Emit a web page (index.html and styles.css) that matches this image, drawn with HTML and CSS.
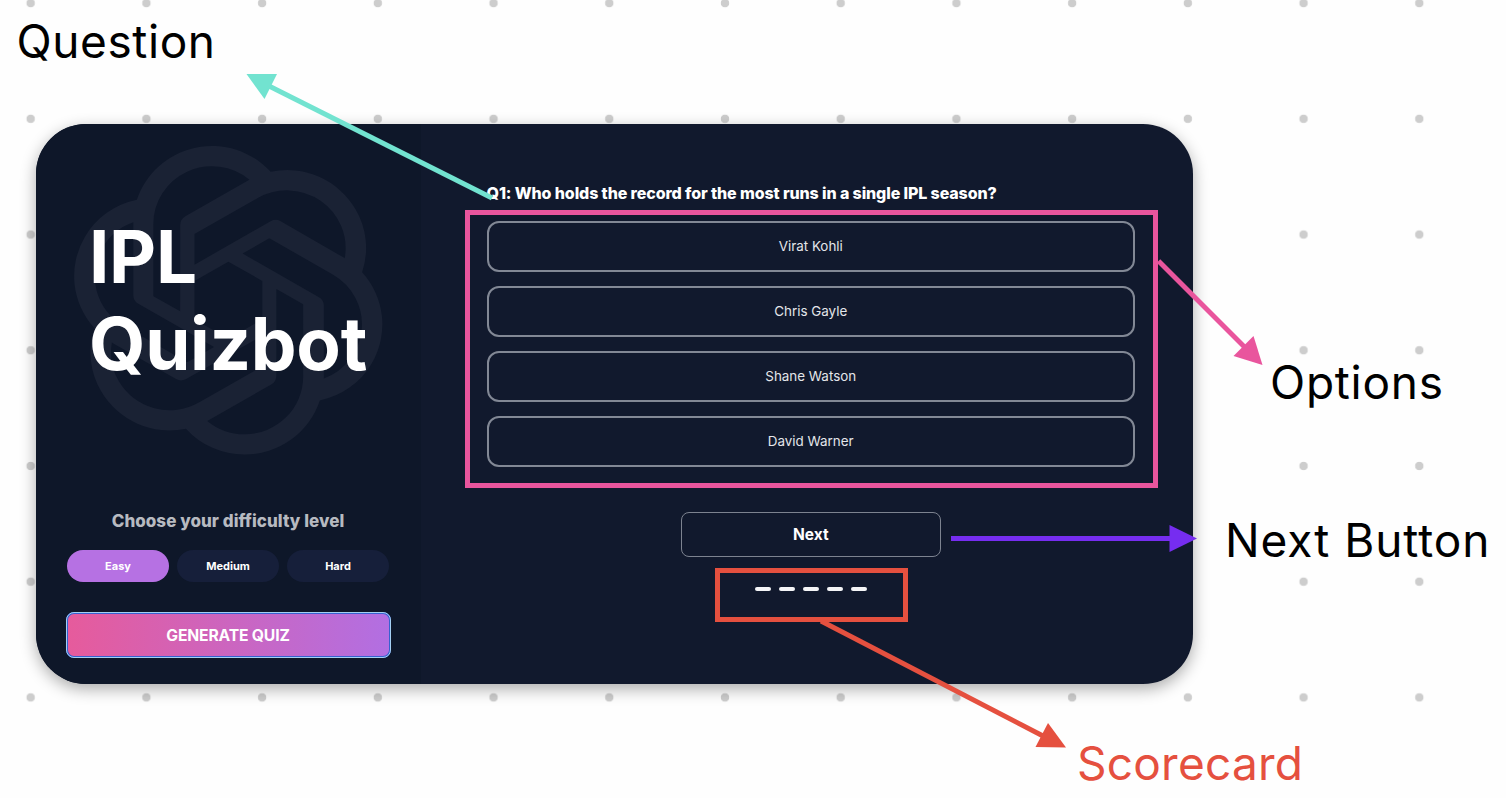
FILE: index.html
```html
<!DOCTYPE html>
<html lang="en">
<head>
<meta charset="utf-8">
<title>IPL Quizbot</title>
<link rel="stylesheet" href="styles.css">
</head>
<body>
<div class="board">
  <main class="card">
    <section class="side">
      <svg class="emblem" viewBox="0 0 24 24" preserveAspectRatio="none" aria-hidden="true"><path d="M22.2819 9.8211a5.9847 5.9847 0 0 0-.5157-4.9108 6.0462 6.0462 0 0 0-6.5098-2.9A6.0651 6.0651 0 0 0 4.9807 4.1818a5.9847 5.9847 0 0 0-3.9977 2.9 6.0462 6.0462 0 0 0 .7427 7.0966 5.98 5.98 0 0 0 .511 4.9107 6.051 6.051 0 0 0 6.5146 2.9001A5.9847 5.9847 0 0 0 13.2599 24a6.0557 6.0557 0 0 0 5.7718-4.2058 5.9894 5.9894 0 0 0 3.9977-2.9001 6.0557 6.0557 0 0 0-.7475-7.0729zm-9.022 12.6081a4.4755 4.4755 0 0 1-2.8764-1.0408l.1419-.0804 4.7783-2.7582a.7948.7948 0 0 0 .3927-.6813v-6.7369l2.02 1.1686a.071.071 0 0 1 .038.052v5.5826a4.504 4.504 0 0 1-4.4945 4.4944zm-9.6607-4.1254a4.4708 4.4708 0 0 1-.5346-3.0137l.142.0852 4.783 2.7582a.7712.7712 0 0 0 .7806 0l5.8428-3.3685v2.3324a.0804.0804 0 0 1-.0332.0615L9.74 19.9502a4.4992 4.4992 0 0 1-6.1408-1.6464zM2.3408 7.8956a4.485 4.485 0 0 1 2.3655-1.9728V11.6a.7664.7664 0 0 0 .3879.6765l5.8144 3.3543-2.0201 1.1685a.0757.0757 0 0 1-.071 0l-4.8303-2.7865A4.504 4.504 0 0 1 2.3408 7.872zm16.5963 3.8558L13.1038 8.364 15.1192 7.2a.0757.0757 0 0 1 .071 0l4.8303 2.7913a4.4944 4.4944 0 0 1-.6765 8.1042v-5.6772a.79.79 0 0 0-.407-.667zm2.0107-3.0231l-.142-.0852-4.7735-2.7818a.7759.7759 0 0 0-.7854 0L9.409 9.2297V6.8974a.0662.0662 0 0 1 .0284-.0615l4.8303-2.7866a4.4992 4.4992 0 0 1 6.6802 4.66zM8.3065 12.863l-2.02-1.1638a.0804.0804 0 0 1-.038-.0567V6.0742a4.4992 4.4992 0 0 1 7.3757-3.4537l-.142.0805L8.704 5.459a.7948.7948 0 0 0-.3927.6813zm1.0976-2.3654l2.602-1.4998 2.6069 1.4998v2.9994l-2.5974 1.4997-2.6067-1.4997Z"/></svg>
      <h1 class="title">IPL<br>Quizbot</h1>
      <div class="controls">
        <p class="prompt">Choose your difficulty level</p>
        <div class="levels">
          <button class="level level-active">Easy</button>
          <button class="level">Medium</button>
          <button class="level">Hard</button>
        </div>
        <button class="generate">GENERATE QUIZ</button>
      </div>
    </section>
    <section class="quiz">
      <h2 class="question">Q1: Who holds the record for the most runs in a single IPL season?</h2>
      <div class="options">
        <button class="option">Virat Kohli</button>
        <button class="option">Chris Gayle</button>
        <button class="option">Shane Watson</button>
        <button class="option">David Warner</button>
      </div>
      <button class="next">Next</button>
      <div class="score"><i class="mark"></i><i class="mark"></i><i class="mark"></i><i class="mark"></i><i class="mark"></i></div>
    </section>
  </main>
  <svg class="notes" viewBox="0 0 1506 798">
    <g class="teal"><path class="line" d="M268 85.500 492 198"/><path class="head" d="M246.500 74H277L264.500 99Z"/></g>
    <g class="pink"><rect class="line" x="467.500" y="212.500" width="688" height="273"/><path class="line" d="M1158.500 261 1246 348.500"/><path class="head" d="M1262.500 365 1253.500 336 1233.500 356Z"/></g>
    <g class="violet"><path class="line" d="M951 538.500H1172"/><path class="head" d="M1197 538.500 1169.500 525V552Z"/></g>
    <g class="red"><rect class="line" x="717.500" y="570.500" width="188" height="49"/><path class="line" d="M821 621 1045 737"/><path class="head" d="M1066 747.500 1048 723 1035.500 747Z"/></g>
    <g class="label">
      <text x="16.500" y="57.500" textLength="198.500">Question</text>
      <text x="1270" y="398.500" textLength="173">Options</text>
      <text x="1225" y="556.500" textLength="264.500">Next Button</text>
      <text class="label-red" x="1077" y="779.500" textLength="226">Scorecard</text>
    </g>
  </svg>
</div>
</body>
</html>
```
FILE: styles.css
```css
* { box-sizing: border-box; }
body { margin: 0; font-family: Inter, sans-serif; }
button { margin: 0; padding: 0; border: 0; font-family: inherit; color: #fff; }

.board {
  position: relative;
  width: 1506px;
  height: 798px;
  overflow: hidden;
  padding: 123.500px 0 0 35.500px;
  background: #fefefe radial-gradient(circle, #cdcdcd 3.900px, rgba(205, 205, 205, 0) 4.600px) -27.200px -54.750px / 115.720px 115.720px;
}

.card {
  display: flex;
  width: 1157px;
  height: 560.500px;
  overflow: hidden;
  border-radius: 50px;
  background: #11192d;
  box-shadow: 0 5px 16px rgba(0, 0, 0, .33);
}

.side {
  position: relative;
  display: flex;
  flex-direction: column;
  justify-content: space-between;
  width: 385px;
  padding: 90.500px 30px 26px;
  background: #0e1729;
}
.emblem {
  position: absolute;
  left: 36px;
  top: 22.500px;
  width: 312.500px;
  height: 308.500px;
  fill: #1a2234;
}
.title {
  position: relative;
  margin: 0 0 0 23.500px;
  font-size: 72.700px;
  line-height: 87px;
  letter-spacing: -.300px;
  font-weight: 700;
  color: #fff;
}
.controls { display: flex; flex-direction: column; }
.prompt {
  margin: 0;
  text-align: center;
  white-space: nowrap;
  font-size: 17px;
  line-height: 24px;
  letter-spacing: .040px;
  font-weight: 800;
  color: #b7bac0;
}
.levels { display: flex; gap: 8px; padding: 0 1.500px; margin: 17px 0 30.500px; }
.level {
  flex: 1;
  height: 32px;
  border-radius: 16px;
  background: #161f3a;
  font-size: 11px;
  font-weight: 700;
}
.level-active { background: #b671e3; }
.generate {
  height: 46px;
  border: 2px solid #3761cf;
  outline: 1px solid #a5d0f3;
  outline-offset: -1px;
  border-radius: 8px;
  background: linear-gradient(90deg, #e65b9c, #b26fe2);
  font-size: 15.700px;
  letter-spacing: -.180px;
  font-weight: 700;
}

.quiz {
  display: flex;
  flex: 1;
  flex-direction: column;
  align-items: center;
  padding: 57px 57.500px 0 66px;
}
.question {
  align-self: flex-start;
  margin: 0;
  white-space: nowrap;
  font-size: 16px;
  line-height: 25px;
  letter-spacing: -.115px;
  font-weight: 800;
  color: #fff;
}
.options { display: grid; gap: 14px; width: 100%; margin: 15px 0 45.500px; }
.option {
  height: 51px;
  border: 2px solid #828895;
  border-radius: 12px;
  background: transparent;
  font-size: 13.400px;
  color: #e4e6ea;
}
.next {
  width: 260px;
  height: 45px;
  border: 1.500px solid #7d8390;
  border-radius: 8px;
  background: transparent;
  font-size: 15.500px;
  font-weight: 700;
}
.score { display: flex; gap: 8px; margin-top: 30px; }
.mark { width: 16px; height: 4px; border-radius: 2px; background: #f4f5f7; }

.notes { position: absolute; inset: 0; width: 1506px; height: 798px; }
.line { fill: none; stroke: currentColor; stroke-width: 5; }
.head { fill: currentColor; }
.teal { color: #72e3d0; }
.pink { color: #e9559d; }
.violet { color: #762df0; }
.red { color: #e5503f; }
.label { font-size: 46px; fill: #000; }
.label-red { fill: #e5503f; }
```
